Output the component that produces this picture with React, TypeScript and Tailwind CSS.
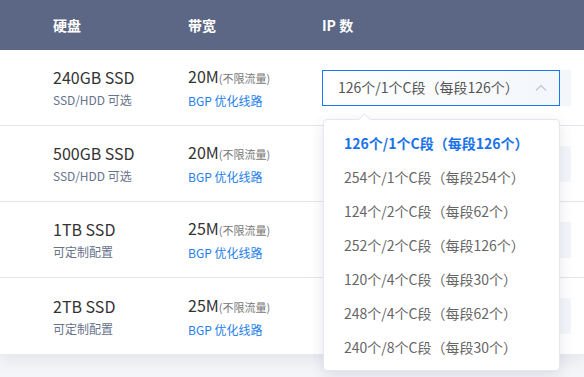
import React from 'react';

type Row = { disk: string; diskNote: string; bw: string };

const ROWS: Row[] = [
  { disk: '240GB SSD', diskNote: 'SSD/HDD 可选', bw: '20M' },
  { disk: '500GB SSD', diskNote: 'SSD/HDD 可选', bw: '20M' },
  { disk: '1TB SSD', diskNote: '可定制配置', bw: '25M' },
  { disk: '2TB SSD', diskNote: '可定制配置', bw: '25M' },
];

const IP_OPTIONS = [
  '126个/1个C段（每段126个）',
  '254个/1个C段（每段254个）',
  '124个/2个C段（每段62个）',
  '252个/2个C段（每段126个）',
  '120个/4个C段（每段30个）',
  '248个/4个C段（每段62个）',
  '240个/8个C段（每段30个）',
];

const font = { fontFamily: '"Noto Sans CJK SC", "Noto Sans", sans-serif' };

export default function App() {
  return (
    <div className="relative w-[584px] h-[377px] overflow-hidden bg-[#f4f5f8]" style={font}>
      <div className="bg-white shadow-[0_6px_14px_rgba(40,50,80,0.08)]">
        {/* header */}
        <div className="flex items-center h-[50px] bg-[#5b6785] pl-[53px] text-[14px] font-bold text-white">
          <div className="w-[135px]">硬盘</div>
          <div className="w-[134px]">带宽</div>
          <div>IP 数</div>
        </div>

        {ROWS.map((row, i) => (
          <div
            key={row.disk}
            className={`flex items-center h-[76px] pl-[53px] ${i < ROWS.length - 1 ? 'border-b border-[#e2e7ef]' : ''}`}
          >
            <div className="w-[135px]">
              <div className="text-[16px] leading-[20px] text-[#333]">{row.disk}</div>
              <div className="mt-[5px] text-[12px] leading-[16px] text-[#67728b]">{row.diskNote}</div>
            </div>
            <div className="w-[134px]">
              <div className="text-[16px] leading-[20px] text-[#333]">
                {row.bw}
                <span className="text-[11px] text-[#777]">(不限流量)</span>
              </div>
              <div className="mt-[5px] text-[12px] leading-[16px] text-[#2680eb]">BGP 优化线路</div>
            </div>
            <div className="w-[249px] h-[36px] bg-gradient-to-r from-white to-[#f3f6fb]">
              {i === 0 && (
                <div className="flex items-center justify-between w-[238px] h-[36px] border border-[#1677ff] pl-[15px] pr-[12px] text-[14px] text-[#555]">
                  <span>126个/1个C段（每段126个）</span>
                  <svg width="12" height="8" viewBox="0 0 12 8" fill="none">
                    <path d="M1 6.5 6 1.5l5 5" stroke="#c4c8d0" strokeWidth="1.3" />
                  </svg>
                </div>
              )}
            </div>
          </div>
        ))}
      </div>

      {/* dropdown */}
      <div className="absolute left-[323px] top-[119px] w-[237px] rounded-[4px] border border-[#e4e7ed] bg-white py-[6px] shadow-[0_4px_14px_rgba(40,50,80,0.12)]">
        <div className="absolute -top-[5px] left-[36px] h-[9px] w-[9px] rotate-45 border-l border-t border-[#e4e7ed] bg-white" />
        {IP_OPTIONS.map((opt, i) => (
          <div
            key={opt}
            className={`flex items-center h-[34px] pl-[20px] text-[14px] ${i === 0 ? 'font-bold text-[#1a73e8]' : 'text-[#666]'}`}
          >
            {opt}
          </div>
        ))}
      </div>
    </div>
  );
}
